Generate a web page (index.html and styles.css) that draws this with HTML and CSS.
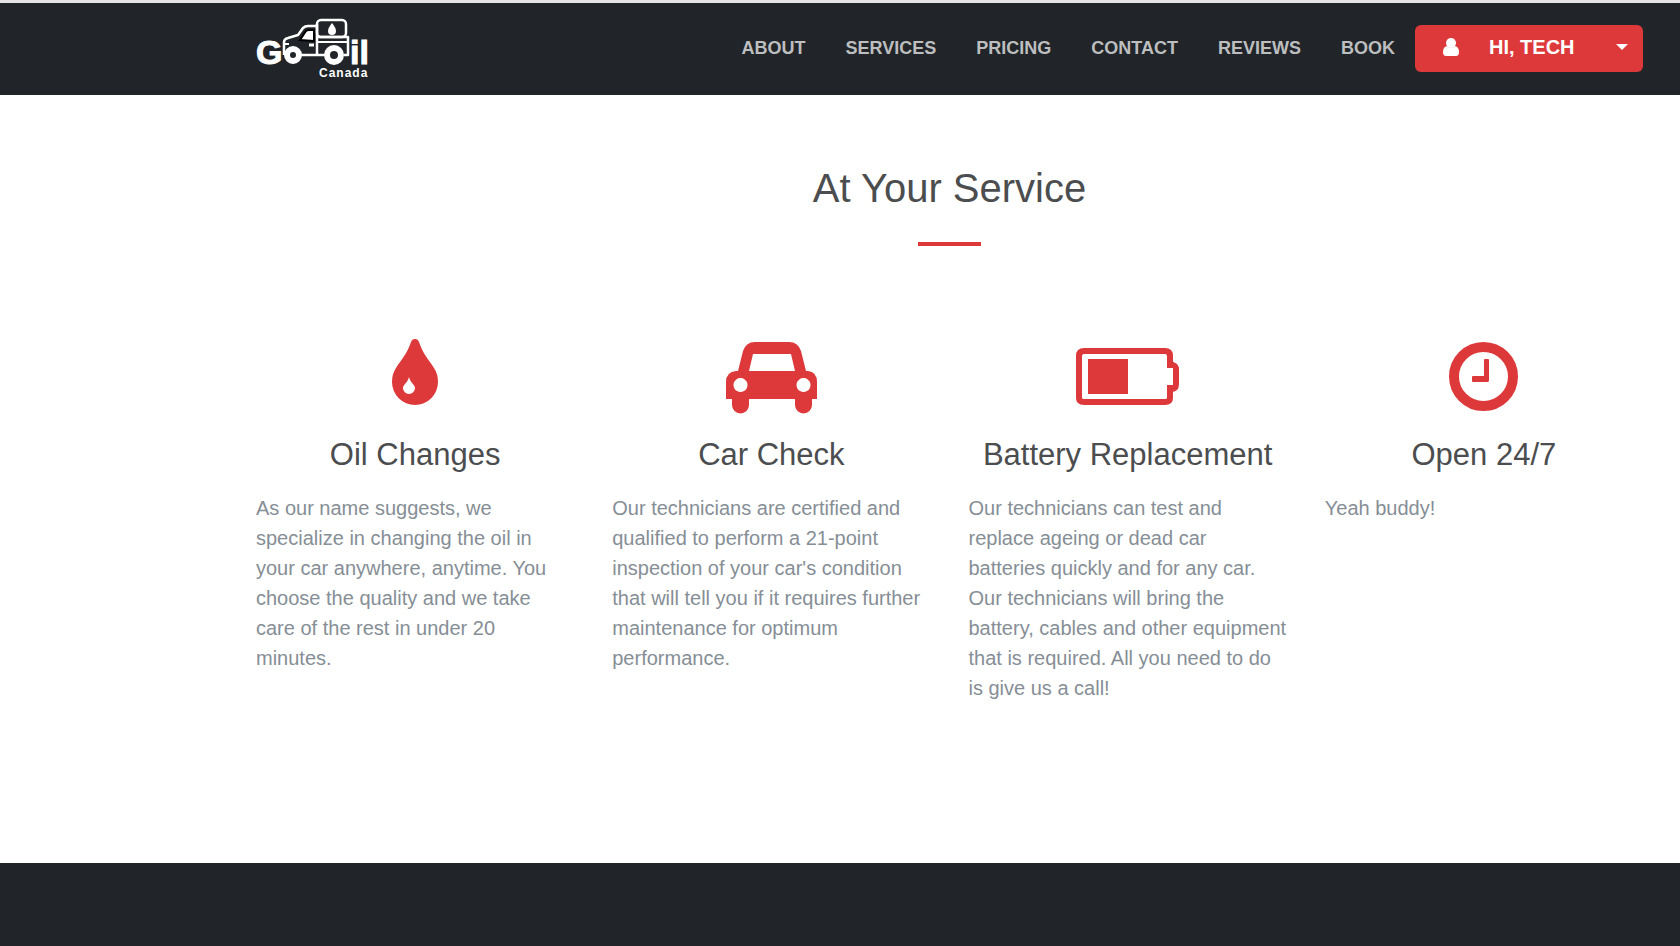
FILE: index.html
```
<!DOCTYPE html>
<html lang="en">

	<head>
		<meta charset="utf-8" />
		<meta name="viewport" content="width=device-width, initial-scale=1" />
		<title>Go Oil Canada</title>
		<link rel="stylesheet" href="styles.css">
	</head>

	<body>
		<header class="navbar">
			<a class="brand" href="#top" aria-label="Go Oil Canada">
				<svg class="logo" width="114" height="62" viewBox="0 0 114 62">
					<!-- truck -->
					<g fill="none" stroke="#fff" stroke-width="2.5" stroke-linejoin="round">
						<path d="M28 37V24q0-3 4-4l10-3 5-7q2-2 5-2h9" />
						<rect x="61" y="2" width="29" height="17" rx="4" />
						<path d="M61 6v31M61 19h31v18H88M45 37h24" />
						<path d="M61 24h31M28 26h5" stroke-width="2" />
					</g>
					<path d="M44 22l6-9q1-1 3-1h5v11z" fill="#fff" stroke="#000" stroke-width="2" />
					<path d="M53 27h5" stroke="#fff" stroke-width="3" />
					<path d="M76 5q4 5 4 8a4 4 0 0 1-8 0q0-3 4-8z" fill="#fff" />
					<!-- wheels -->
					<circle cx="37" cy="37" r="6" fill="#212529" stroke="#fff" stroke-width="6" />
					<circle cx="78" cy="37" r="7" fill="#212529" stroke="#fff" stroke-width="6" />
					<text class="logo-name" x="0" y="46">G</text>
					<text class="logo-name" x="94" y="46">il</text>
					<text class="logo-sub" x="63" y="59">Canada</text>
				</svg>
			</a>

			<nav class="menu">
				<a href="#about">About</a>
				<a href="#services">Services</a>
				<a href="#pricing">Pricing</a>
				<a href="#contact">Contact</a>
				<a href="#reviews">Reviews</a>
				<a href="#book">Book</a>
				<button class="user" type="button">
					<svg width="16" height="18" viewBox="0 0 16 18" fill="#fff">
						<path d="M4 8Q0 9 0 14q0 4 3 4h10q3 0 3-4 0-5-4-6-4 3-8 0z" />
						<circle cx="8" cy="5" r="5" />
					</svg>
					<span>Hi, Tech</span>
					<i class="caret"></i>
				</button>
			</nav>
		</header>

		<main class="services" id="services">
			<h2>At Your Service</h2>
			<hr />

			<div class="service-list">
				<div class="service">
					<svg class="icon" width="46" height="84" viewBox="0 0 46 84">
						<path fill-rule="evenodd" d="M23 7q3 0 4 3c4 12 10 18 15 26q4 6 4 14a23 23 0 0 1-46 0q0-8 4-14c5-8 11-14 15-26q1-3 4-3zM17 45c-1 5-6 8-6 11a6 6 0 0 0 12 0c0-3-5-6-6-11z" />
					</svg>
					<h3>Oil Changes</h3>
					<p>As our name suggests, we specialize in changing the oil in your car anywhere, anytime. You choose the quality and we take care of the rest in under 20 minutes.</p>
				</div>

				<div class="service">
					<svg class="icon" width="91" height="84" viewBox="0 0 91 84">
						<path fill-rule="evenodd" d="M12 39l5-20q3-9 12-9h34q9 0 12 9l5 20h2q9 1 9 11v17h-5v6a8 8 0 0 1-17 0v-6H23v6a8 8 0 0 1-17 0v-6H0V50q0-10 10-11zM23 39h46l-4-17H27zM14 46a7 7 0 1 0 1 0zM77 46a7 7 0 1 0 1 0z" />
					</svg>
					<h3>Car Check</h3>
					<p>Our technicians are certified and qualified to perform a 21-point inspection of your car's condition that will tell you if it requires further maintenance for optimum performance.</p>
				</div>

				<div class="service">
					<svg class="icon" width="103" height="84" viewBox="0 0 103 84">
						<path fill="none" stroke="#dd393b" stroke-width="6" d="M8 19h81q5 0 5 5v9h1q5 0 5 5v14q0 5-5 5h-1v9q0 4-5 4H8q-5 0-5-4V24q0-5 5-5z" />
						<path d="M91 30h7v6h-7zM91 53h7v6h-7zM12 27h40v35H12z" />
						<path class="gap" d="M91 36h6v17h-6z" />
					</svg>
					<h3>Battery Replacement</h3>
					<p>Our technicians can test and replace ageing or dead car batteries quickly and for any car. Our technicians will bring the battery, cables and other equipment that is required. All you need to do is give us a call!</p>
				</div>

				<div class="service">
					<svg class="icon" width="69" height="84" viewBox="0 0 69 84">
						<circle cx="34.5" cy="44.5" r="29.5" fill="none" stroke="#dd393b" stroke-width="10" />
						<path d="M36 27h3q1 0 1 1v20q0 2-1 2H24q-1 0-1-1v-4q0-1 1-1h11V28q0-1 1-1z" />
					</svg>
					<h3>Open 24/7</h3>
					<p>Yeah buddy!</p>
				</div>
			</div>
		</main>

		<section class="dark"></section>
	</body>

</html>
```
FILE: styles.css
```
* {
	box-sizing: border-box;
}

body {
	margin: 0;
	min-height: 100vh;
	display: flex;
	flex-direction: column;
	background: #fff;
	font-family: "Liberation Sans", Arial, sans-serif;
	font-size: 20px;
	line-height: 30px;
}

.navbar {
	display: flex;
	justify-content: space-between;
	align-items: flex-start;
	padding: 15px 37px 15px 256px;
	border-top: 3px solid #e4e4e4;
	background: #212529;
}

.logo {
	display: block;
	overflow: visible;
}

.logo text {
	fill: #fff;
	font-weight: bold;
}

.logo-name {
	font-size: 34px;
	stroke: #fff;
	stroke-width: 1px;
}

.logo-sub {
	font-size: 12px;
	letter-spacing: 1px;
}

.menu {
	display: flex;
	align-items: center;
	padding-top: 7px;
}

.menu a {
	padding: 0 20px 2px;
	color: #bcbebf;
	font-size: 18px;
	font-weight: bold;
	text-decoration: none;
	text-transform: uppercase;
}

.user {
	display: flex;
	align-items: center;
	width: 228px;
	height: 47px;
	padding: 0 15px 3px 28px;
	border: 0;
	border-radius: 6px;
	background: #dd393b;
	color: #fff;
	font: bold 20px "Liberation Sans", Arial, sans-serif;
	text-transform: uppercase;
}

.user span {
	margin-left: 30px;
}

.caret {
	margin-left: auto;
	border: 6px solid transparent;
	border-top-color: #fff;
	border-bottom: 0;
}

.services {
	padding: 63px 18px 160px 237px;
}

h2,
h3 {
	margin: 0;
	color: #4b4d4f;
	font-weight: normal;
	text-align: center;
}

h2 {
	font-size: 40px;
	line-height: 60px;
}

hr {
	width: 63px;
	height: 4px;
	margin: 24px auto 86px;
	border: 0;
	background: #dd393b;
}

.service-list {
	display: grid;
	grid-template-columns: repeat(4, 1fr);
}

.service {
	padding: 0 19px;
}

.icon {
	display: block;
	margin: 0 auto 20px;
	fill: #dd393b;
}

.icon .gap {
	fill: #fff;
}

h3 {
	margin-bottom: 20px;
	font-size: 31px;
	line-height: 37px;
}

p {
	margin: 0;
	color: #868e96;
}

.dark {
	flex: 1;
	min-height: 83px;
	background: #212529;
}
```
